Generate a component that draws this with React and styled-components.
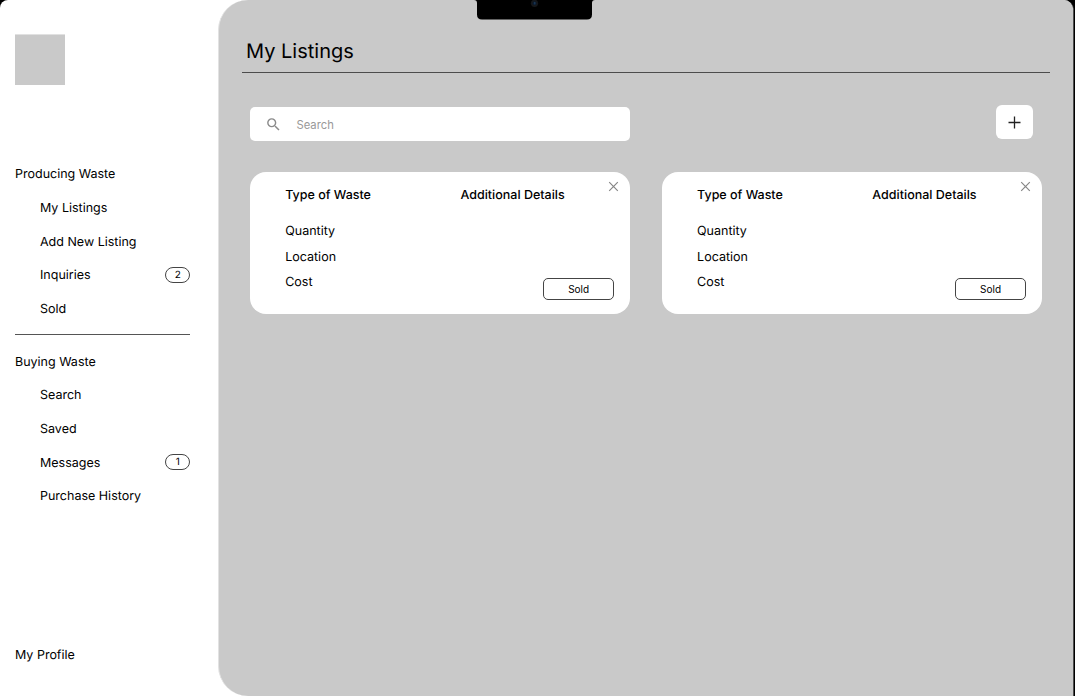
import React from "react";
import styled, { createGlobalStyle } from "styled-components";

const Global = createGlobalStyle`
  * { box-sizing: border-box; }
  html, body { margin: 0; background: #000; overflow: hidden; }
  body { font-family: Inter, "Liberation Sans", sans-serif; font-size: 12.5px; line-height: 16px; color: #000; text-rendering: geometricPrecision; }
  button, input { font: inherit; color: inherit; margin: 0; padding: 0; }
`;

const Screen = styled.div`
  position: relative;
  display: flex;
  width: 1074px;
  height: 696px;
  background: #fff;
  border-right: 1px solid #4c4c4c;
  border-radius: 8px 10px 0 0;
  overflow: hidden;
`;

const Notch = styled.div`
  position: absolute;
  top: 0;
  left: 474px;
  width: 121px;
  height: 20px;
`;

const Sidebar = styled.aside`
  display: flex;
  flex-direction: column;
  flex: none;
  width: 218px;
  padding: 34px 27.6px 32.2px 15px;
`;

const Logo = styled.div`
  width: 50px;
  height: 51px;
  margin-bottom: 72.3px;
  border-top: 1px solid #e1e1e1;
  background: #c9c9c9;
`;

const NavGroup = styled.nav`
  display: flex;
  flex-direction: column;
`;

const NavRow = styled.a`
  display: flex;
  align-items: center;
  justify-content: space-between;
  height: 33.73px;
  padding-top: 2px;
  padding-left: ${(p) => (p.$nested ? "25px" : "0")};
  white-space: nowrap;
`;

const Badge = styled.span`
  width: 25.4px;
  height: 15.5px;
  margin-top: -2.9px;
  border: 1px solid #444;
  border-radius: 8px;
  font-size: 10px;
  line-height: 14px;
  text-align: center;
`;

const Divider = styled.hr`
  width: 175px;
  height: 1px;
  margin: 8.6px 0 9.2px;
  border: 0;
  background: #555;
`;

const Profile = styled.a`
  margin-top: auto;
`;

const Main = styled.main`
  flex: 1;
  padding: 38px 23px 0 23px;
  background: #c9c9c9;
  border-left: 1px solid #e2e2e2;
  border-radius: 30px 0 0 30px;
`;

const Title = styled.h1`
  margin: 0;
  padding: 0 0 7.5px 4px;
  border-bottom: 1px solid #4c4c4c;
  font-size: 20px;
  font-weight: 400;
  line-height: 26px;
`;

const Toolbar = styled.div`
  display: flex;
  align-items: flex-start;
  justify-content: space-between;
  padding: 32.5px 17px 0 7.7px;
`;

const SearchBox = styled.label`
  display: flex;
  align-items: center;
  width: 380.5px;
  height: 34px;
  margin-top: 2px;
  padding-left: 15px;
  background: #fff;
  border-radius: 5px;
`;

const SearchInput = styled.input`
  width: 250px;
  margin: 1px 0 0 14.8px;
  border: 0;
  outline: 0;
  background: none;
  font-size: 11.25px;
  &::placeholder { color: #999; opacity: 1; }
`;

const AddButton = styled.button`
  display: grid;
  place-items: center;
  width: 37.5px;
  height: 34px;
  border: 0;
  border-radius: 6px;
  background: #fff;
`;

const Cards = styled.div`
  display: grid;
  grid-template-columns: 380.7px 380.7px;
  gap: 31.2px;
  padding: 31.3px 0 0 7.7px;
`;

const Card = styled.article`
  display: grid;
  grid-template-columns: 175.3px minmax(0, 1fr) auto;
  height: 141.6px;
  padding: 14px 11.2px 0 35.5px;
  background: #fff;
  border-radius: 16px;
`;

const Column = styled.div`
  display: flex;
  flex-direction: column;
  padding-top: 1.6px;
`;

const Heading = styled.h2`
  margin: 0 0 15.1px;
  font-size: 12.5px;
  font-weight: 500;
  line-height: 16px;
  white-space: nowrap;
`;

const Field = styled.div`
  height: 25.6px;
  line-height: 26px;
`;

const Actions = styled.div`
  display: flex;
  flex-direction: column;
  justify-content: space-between;
  align-items: flex-end;
  height: 114px;
`;

const CloseButton = styled.button`
  display: flex;
  margin-top: -5px;
  border: 0;
  background: none;
`;

const SoldButton = styled.button`
  width: 71px;
  height: 22px;
  margin-right: 5px;
  border: 1px solid #444;
  border-radius: 5px;
  background: #fff;
  font-size: 10px;
  line-height: 18px;
`;

const Listing = () => (
  <Card>
    <Column>
      <Heading>Type of Waste</Heading>
      <Field>Quantity</Field>
      <Field>Location</Field>
      <Field>Cost</Field>
    </Column>
    <Column>
      <Heading>Additional Details</Heading>
    </Column>
    <Actions>
      <CloseButton aria-label="Remove">
        <svg width="11" height="11" viewBox="0 0 11 11" fill="none" stroke="#858585" strokeWidth="1.15">
          <path d="M1.2 1.2l8.6 8.6M9.8 1.2L1.2 9.8" />
        </svg>
      </CloseButton>
      <SoldButton>Sold</SoldButton>
    </Actions>
  </Card>
);

const producing = [["My Listings"], ["Add New Listing"], ["Inquiries", 2], ["Sold"]];
const buying = [["Search"], ["Saved"], ["Messages", 1], ["Purchase History"]];

const Group = ({ title, items }) => (
  <NavGroup>
    <NavRow>{title}</NavRow>
    {items.map(([label, count]) => (
      <NavRow key={label} $nested>
        {label}
        {count && <Badge>{count}</Badge>}
      </NavRow>
    ))}
  </NavGroup>
);

export default function App() {
  return (
    <>
      <Global />
      <Screen>
        <Sidebar>
          <Logo />
          <Group title="Producing Waste" items={producing} />
          <Divider />
          <Group title="Buying Waste" items={buying} />
          <Profile>My Profile</Profile>
        </Sidebar>
        <Main>
          <Title>My Listings</Title>
          <Toolbar>
            <SearchBox>
              <svg width="17" height="17" viewBox="0 0 24 24" fill="#8a8a8a">
                <path d="M15.5 14h-.79l-.28-.27A6.47 6.47 0 0 0 16 9.5 6.5 6.5 0 1 0 9.5 16c1.61 0 3.09-.59 4.23-1.57l.27.28v.79l5 4.99L20.49 19l-4.99-5zm-6 0C7.01 14 5 11.99 5 9.5S7.01 5 9.5 5 14 7.01 14 9.5 11.99 14 9.5 14z" />
              </svg>
              <SearchInput placeholder="Search" />
            </SearchBox>
            <AddButton aria-label="Add listing">
              <svg width="13" height="13" viewBox="0 0 13 13" stroke="#222" strokeWidth="1.3">
                <path d="M6.5 .5v12M.5 6.5h12" />
              </svg>
            </AddButton>
          </Toolbar>
          <Cards>
            <Listing />
            <Listing />
          </Cards>
        </Main>
        <Notch>
          <svg width="121" height="20" viewBox="0 0 121 20">
            <path d="M0 0Q3 0 3 3V14.5Q3 19.5 8 19.5H113Q118 19.5 118 14.5V3Q118 0 121 0Z" fill="#000" />
            <circle cx="60.5" cy="3.3" r="3.6" fill="#15171a" />
            <circle cx="60.5" cy="3.3" r="1.7" fill="#071c36" />
            <path d="M60.8 2v2.4" stroke="#34506c" strokeWidth=".7" />
          </svg>
        </Notch>
      </Screen>
    </>
  );
}
